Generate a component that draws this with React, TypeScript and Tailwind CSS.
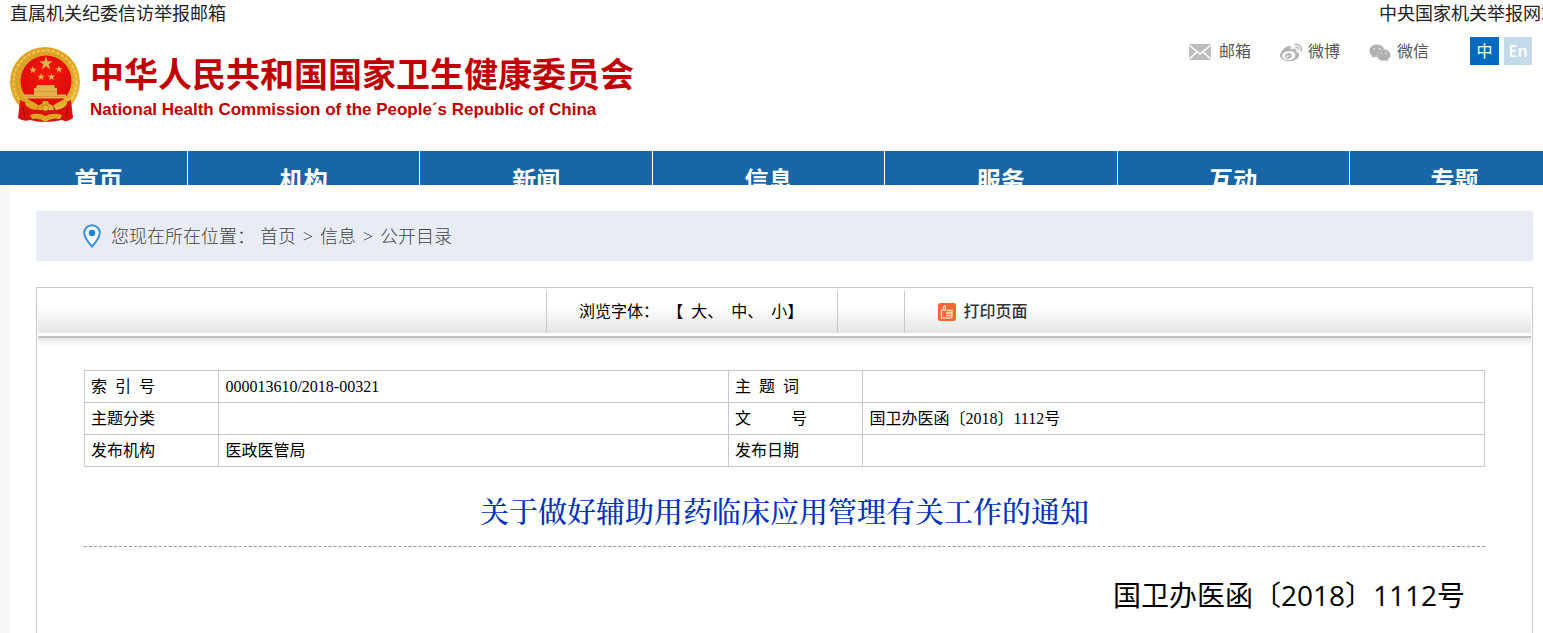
import { useState } from "react";
import { FaWeibo } from "react-icons/fa";

const NAV_ITEMS = ["首页", "机构", "新闻", "信息", "服务", "互动", "专题"];

const CRUMBS = ["首页", "信息", "公开目录"];

// \u2002 is an en space, half a character wide
const RECORD_ROWS = [
  ["索\u2002引\u2002号", "000013610/2018-00321", "主\u2002题\u2002词", ""],
  ["主题分类", "", "文\u2002\u2002\u2002\u2002\u2002号", "国卫办医函〔2018〕1112号"],
  ["发布机构", "医政医管局", "发布日期", ""],
];

const FONT_SIZES = [
  { label: "大", after: "、", className: "text-[28px]" },
  { label: "中", after: "、", className: "text-2xl" },
  { label: "小", after: "】", className: "text-xl" },
];

const STAR = "M0 -10 L2.4 -3.1 L9.5 -3.1 L3.8 1.2 L5.9 8.1 L0 3.9 L-5.9 8.1 L-3.8 1.2 L-9.5 -3.1 L-2.4 -3.1 Z";

function Emblem() {
  return (
    <svg viewBox="0 0 70 76" className="h-[76px] w-[70px] shrink-0" aria-hidden="true">
      <defs>
        <linearGradient id="gold" x1="0" y1="0" x2="1" y2="1">
          <stop offset="0" stopColor="#dfa52c" />
          <stop offset="0.5" stopColor="#e0a51f" />
          <stop offset="1" stopColor="#edc04a" />
        </linearGradient>
        <radialGradient id="field" cx="0.5" cy="0.4" r="0.6">
          <stop offset="0" stopColor="#f5180f" />
          <stop offset="1" stopColor="#dc0a08" />
        </radialGradient>
      </defs>
      <circle cx="35" cy="35" r="35" fill="url(#gold)" />
      <circle cx="35" cy="35" r="31.5" fill="none" stroke="#f3d065" strokeWidth="1.5" strokeDasharray="3 2" />
      <circle cx="35" cy="35" r="28" fill="none" stroke="#cb8e1c" strokeWidth="1" strokeDasharray="2 3" />
      <circle cx="36" cy="34" r="25.5" fill="url(#field)" />
      <g fill="#e8b04a">
        <path d={STAR} transform="translate(36 16.5) scale(.7)" />
        <path d={STAR} transform="translate(23 23) scale(.4)" />
        <path d={STAR} transform="translate(49 22.5) scale(.4)" />
        <path d={STAR} transform="translate(31 30) scale(.4)" />
        <path d={STAR} transform="translate(41.5 30) scale(.4)" />
        <path d="M27 38h17l1 3H26z M24 41h23v7H24z M14 47.500h42v4H14z" />
      </g>
      <path d="M24 44.500h23 M15 49.500h40" stroke="#c98a2a" strokeWidth="0.6" />
      {/* Ribbons and the wheel between them */}
      <path d="M10 53L22 58L50 58L61 53L63 71Q57 76 52 73Q43 75 35 75Q27 75 20 73Q13 75 8 71Z" fill="#d9120d" />
      <path d="M16 52Q25 55 29 59L26 63Q18 62 15 57Z M56 52Q47 55 43 59L46 63Q54 62 57 57Z" fill="url(#gold)" />
      <path d="M27 63l2-5 3-1 1-3h5l1 3 3 1 2 5z" fill="url(#gold)" />
      <circle cx="35.500" cy="61" r="3" fill="#e9b93c" stroke="#b96b10" strokeWidth="0.8" />
      <path d="M20 68Q28 65 35.500 69Q43 65 52 68L50 72Q42 70 35.500 75Q29 70 22 72Z" fill="url(#gold)" />
      <path d="M13 60L15 71 M58 60L56 71" stroke="#a90c08" strokeWidth="1.2" />
    </svg>
  );
}

function MailIcon() {
  return (
    <svg viewBox="0 0 22 16" className="mt-[2px] h-4 w-[22px]" aria-hidden="true">
      <rect width="22" height="16" fill="#bdbdbd" />
      <path d="M0 1 L11 10 L22 1 M0 15 L8 8 M22 15 L14 8" fill="none" stroke="#fff" strokeWidth="1.6" />
    </svg>
  );
}

function WeixinIcon() {
  return (
    <svg viewBox="0 0 22 18" className="mt-[3px] h-[18px] w-[22px]" aria-hidden="true">
      <path
        d="M8 0.500C3.800 0.500 0.500 3.300 0.500 6.800C0.500 8.800 1.600 10.500 3.200 11.700L2.700 14L5.400 12.700C6.200 13 7.100 13.100 8 13.100C12.200 13.100 15.500 10.300 15.500 6.800S12.200 0.500 8 0.500Z"
        fill="#b0b0b0"
      />
      <path
        d="M14.500 5.300C10.800 5.300 7.900 7.900 7.900 11.100S10.800 16.800 14.500 16.800C15.300 16.800 16.100 16.700 16.800 16.400L19.300 17.600L18.800 15.400C20.500 14.400 21.500 12.900 21.500 11.100C21.500 7.900 18.200 5.300 14.500 5.300Z"
        fill="#b0b0b0"
        stroke="#d8d8d8"
        strokeWidth="0.6"
      />
      <g fill="#e2e2e2">
        <circle cx="5.300" cy="4.800" r="1" />
        <circle cx="10.500" cy="4.800" r="1" />
        <circle cx="12.300" cy="9.300" r="0.9" />
        <circle cx="17" cy="9.300" r="0.9" />
      </g>
    </svg>
  );
}

function PinIcon() {
  return (
    <svg viewBox="0 0 18 24" className="h-6 w-[18px]" aria-hidden="true">
      <path
        d="M9 1.2C4.7 1.2 1.2 4.6 1.2 8.8C1.2 14 9 22.5 9 22.5S16.8 14 16.8 8.8C16.8 4.6 13.3 1.2 9 1.2Z"
        fill="#f3f8fd"
        stroke="#3f92d8"
        strokeWidth="2"
      />
      <circle cx="9" cy="9" r="3.2" fill="#2381d3" />
    </svg>
  );
}

function PrintIcon() {
  return (
    <svg viewBox="0 0 18 18" className="h-[18px] w-[18px]" aria-hidden="true">
      <rect width="18" height="18" rx="2" fill="#ee6c34" />
      <path
        d="M8 7H3.500V15H12Q14 15 14 13V7.500H8.500 M5.500 7V3.500Q6.500 2.500 7.500 3.500V7 M8 10H14 M8 12.500H14"
        fill="none"
        stroke="#ffdcb8"
        strokeWidth="1.3"
      />
    </svg>
  );
}

function Header() {
  return (
    <header className="h-[151px] pr-[27px]">
      <div className="-mr-[27px] flex justify-between text-lg leading-[26px] text-[#222]">
        <a href="#mail">直属机关纪委信访举报邮箱</a>
        <a href="#report">中央国家机关举报网站</a>
      </div>
      <div className="flex items-start justify-between">
        <a href="#home" className="mt-[21px] flex gap-[10px] text-[#c00000]">
          <Emblem />
          <span className="flex flex-col pt-1">
            <span className="text-[34px] font-bold leading-[46px]">中华人民共和国国家卫生健康委员会</span>
            <span className="font-['Liberation_Sans'] text-[17px] font-bold leading-[26px]">
              National Health Commission of the People´s Republic of China
            </span>
          </span>
        </a>
        <div className="mt-[11px] flex h-7 items-center text-base text-[#555]">
          <a href="#post" className="mr-[29px] flex items-center gap-2">
            <MailIcon />
            邮箱
          </a>
          <a href="#weibo" className="mr-[29px] flex items-center gap-[6px]">
            <FaWeibo className="mt-1 h-[22px] w-[22px] text-[#b5b5b5]" />
            微博
          </a>
          <a href="#weixin" className="mr-[41px] flex items-center gap-[6px]">
            <WeixinIcon />
            微信
          </a>
          <button type="button" className="mr-[5px] h-7 w-[29px] bg-[#006abc] text-white">
            中
          </button>
          <button type="button" className="h-7 w-7 bg-[#c3daeb] font-semibold text-white">
            En
          </button>
        </div>
      </div>
    </header>
  );
}

export default function App() {
  const [size, setSize] = useState(0);

  return (
    <div className="flex min-h-screen flex-col overflow-x-hidden bg-white font-['Open_Sans','Noto_Sans_CJK_SC',sans-serif]">
      <div className="-mr-4 pl-[10px]">
        <Header />
      </div>

      {/* Main menu, cut off below the first line */}
      <nav className="-mr-4 h-[34px] overflow-hidden bg-[#1966a7] pl-[10px]">
        <ul className="grid grid-cols-[11.5%_15%_15%_15%_15%_15%_13.5%] text-center text-2xl font-bold leading-[58px] text-white">
          {NAV_ITEMS.map((item) => (
            <li key={item} className="border-r border-white last:border-r-0">
              <a href={`#${item}`}>{item}</a>
            </li>
          ))}
        </ul>
      </nav>

      <div className="-mr-4 flex flex-1 flex-col bg-[#f7f7f7] pl-[10px]">
        <main className="flex flex-1 flex-col bg-white px-[26px] pt-[26px]">
          <div className="mb-[26px] flex h-[50px] items-center bg-[#e8edf5] px-[47px] text-lg font-light text-[#444]">
            <PinIcon />
            <span className="ml-[10px] mr-[5px]">您现在所在位置：</span>
            {CRUMBS.map((crumb, i) => (
              <span key={crumb} className="flex">
                {i > 0 && <span className="w-6 text-center">&gt;</span>}
                <a href={`#${crumb}`}>{crumb}</a>
              </span>
            ))}
          </div>

          <article className="flex-1 border-x border-t border-[#c8c8c8] text-black">
            {/* Toolbar */}
            <div className="mx-px h-[45px] bg-linear-to-b from-white from-40% to-[#e5e5e5] pt-[3px] font-['Liberation_Serif','Noto_Sans_CJK_SC',serif] text-base">
              <div className="flex h-full">
                <div className="w-[34.1%] border-r border-[#c8c8c8]" />
                <div className="flex w-[19.5%] items-center border-r border-[#c8c8c8] pl-8">
                  <span className="mr-2">浏览字体：</span>
                  <span>【</span>
                  {FONT_SIZES.map((entry, i) => (
                    <span key={entry.label} className="ml-2">
                      <button type="button" onClick={() => setSize(i)}>
                        {entry.label}
                      </button>
                      {entry.after}
                    </span>
                  ))}
                </div>
                <div className="w-[4.5%] border-r border-[#c8c8c8]" />
                <button type="button" className="flex items-center gap-[7px] pl-[33px] font-medium text-[#333]">
                  <PrintIcon />
                  打印页面
                </button>
              </div>
            </div>
            <div className="mx-px mt-[3px] h-[2px] bg-[#c0c0c0]" />
            <div className="mx-px h-2 bg-linear-to-b from-[#e8e8e8] to-white" />

            <div className="px-[47px] pt-6">
              <table className="w-full table-fixed border-collapse font-['Liberation_Serif','Noto_Sans_CJK_SC',serif] text-base leading-[31px]">
                <colgroup>
                  <col className="w-[9.6%]" />
                  <col className="w-[36.4%]" />
                  <col className="w-[9.6%]" />
                  <col />
                </colgroup>
                <tbody>
                  {RECORD_ROWS.map((row) => (
                    <tr key={row[0]} className="h-8">
                      {row.map((cell, i) =>
                        i % 2 === 0 ? (
                          <th key={i} scope="row" className="border border-[#c8c8c8] pl-[6px] text-left font-normal">
                            {cell}
                          </th>
                        ) : (
                          <td key={i} className="border border-[#c8c8c8] pl-[6px]">
                            {cell}
                          </td>
                        )
                      )}
                    </tr>
                  ))}
                </tbody>
              </table>

              <h1 className="border-b border-dashed border-[#999] pb-[14px] pt-[22px] text-center font-['Noto_Serif_CJK_SC','Noto_Sans_CJK_SC',serif] text-[29px] font-medium leading-[43px] text-[#0033bb]">
                关于做好辅助用药临床应用管理有关工作的通知
              </h1>

              <p className={`pr-5 pt-7 text-right leading-10 ${FONT_SIZES[size].className}`}>
                国卫办医函〔2018〕1112号
              </p>
            </div>
          </article>
        </main>
      </div>
    </div>
  );
}
